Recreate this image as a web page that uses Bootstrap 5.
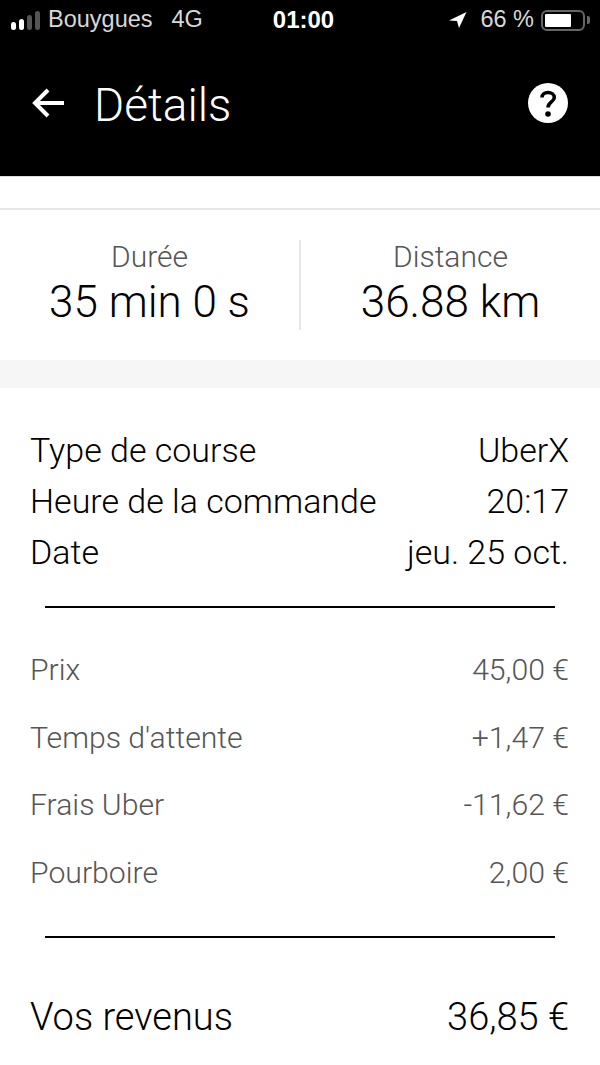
<!DOCTYPE html>
<html lang="fr">
<head>
    <meta charset="UTF-8">
    <meta name="viewport" content="width=device-width, initial-scale=1.0">
    <title>Détails</title>
    <link rel="stylesheet" href="https://cdn.jsdelivr.net/npm/bootstrap@5.3.0/dist/css/bootstrap.min.css">
    <style>
        body {
            background-color: #fff;
            font-family: Roboto, "Noto Sans", sans-serif;
            font-weight: 300;
            color: #000;
        }
        .top-head {
            height: 177px;
            background-color: #000;
            border-bottom: 1px solid #ddd;
        }
        .status-bar {
            height: 38px;
            padding: 2px 10px 0 11px;
            font-family: "Liberation Sans", Arial, sans-serif;
            font-size: 23.5px;
            font-weight: 400;
            color: #d8d8d8;
        }
        .status-left { width: 223px; }
        .status-time { font-size: 24px; font-weight: 700; color: #fff; }
        .status-right { width: 217px; }
        .sig-bars { gap: 3px; margin-right: 8px; }
        .sig-bars span { width: 5px; border-radius: 3px; background: #fff; }
        .sig-bars span.off { background: #555; }
        .bar-a { height: 8px; }
        .bar-b { height: 11px; }
        .bar-c { height: 15px; }
        .bar-d { height: 19px; }
        .net-label { margin-left: 19px; }
        .loc-arrow { margin-right: 13px; }
        .batt-box {
            width: 44px;
            height: 21px;
            margin-left: 7px;
            padding: 2px;
            border: 2px solid #666;
            border-radius: 6px;
        }
        .batt-fill { width: 26px; height: 100%; background: #fff; border-radius: 1px; }
        .batt-tip { width: 3px; height: 8px; margin-left: 2px; background: #666; border-radius: 0 2px 2px 0; }
        .title-bar { height: 130px; padding: 0 32px 0 32px; }
        .title-text { font-size: 46px; font-weight: 300; color: #fff; margin: 4px 0 0 30px; line-height: 1; }
        .stats-wrap { margin-top: 31px; border-top: 2px solid #e6e6e6; height: 152px; padding-top: 30px; }
        .stat-cell { width: 299px; height: 90px; }
        .stat-cell + .stat-cell { width: 301px; border-left: 2px solid #e6e6e6; }
        .stat-label { font-size: 30px; color: #555; line-height: 34px; }
        .stat-value { font-size: 44px; line-height: 52px; padding-top: 2px; }
        .gap-band { height: 28px; background-color: #f6f6f6; }
        .detail-block { padding: 37px 31px 28px 30px; }
        .info-row { font-size: 34px; line-height: 51px; }
        .fare-block { padding: 28px 31px 29.5px 30px; }
        .fare-row { font-size: 30.2px; color: #555; line-height: 67.7px; }
        .rule-line { height: 2px; background: #000; margin: 0 45px; }
        .total-row { font-size: 38px; padding: 0 31px 0 30px; line-height: 48px; margin-top: 55px; }
    </style>
</head>
<body>
    <!-- Header -->
    <div class="top-head">
        <div class="status-bar d-flex align-items-center">
            <div class="status-left d-flex align-items-center">
                <div class="sig-bars d-flex align-items-end">
                    <span class="bar-a"></span><span class="bar-b"></span><span class="bar-c off"></span><span class="bar-d off"></span>
                </div>
                <span>Bouygues</span>
                <span class="net-label">4G</span>
            </div>
            <div class="status-time flex-grow-1 text-center">01:00</div>
            <div class="status-right d-flex align-items-center justify-content-end">
                <svg width="18" height="16" viewBox="0 0 18 16" class="loc-arrow"><path d="M17.500 0 0 8.500l8 .6L10 16z" fill="#fff"/></svg>
                <span>66 %</span>
                <div class="batt-box"><div class="batt-fill"></div></div>
                <div class="batt-tip"></div>
            </div>
        </div>
        <div class="title-bar d-flex align-items-center">
            <svg width="32" height="30" viewBox="0 0 32 30"><path d="M32 15H4M16 2 3 15l13 13" fill="none" stroke="#fff" stroke-width="4"/></svg>
            <h1 class="title-text flex-grow-1">Détails</h1>
            <svg width="40" height="40" viewBox="0 0 40 40"><circle cx="20" cy="20" r="20" fill="#fff"/><path d="M14 14.500c0-3 2.600-5 6-5s6.300 2 6.300 5c0 4.500-6.300 4.500-6.300 10" fill="none" stroke="#000" stroke-width="3.600"/><circle cx="20" cy="31" r="2.800" fill="#000"/></svg>
        </div>
    </div>

    <!-- Duration and distance -->
    <div class="stats-wrap d-flex">
        <div class="stat-cell text-center">
            <div class="stat-label">Durée</div>
            <div class="stat-value">35 min 0 s</div>
        </div>
        <div class="stat-cell text-center">
            <div class="stat-label">Distance</div>
            <div class="stat-value">36.88 km</div>
        </div>
    </div>
    <div class="gap-band"></div>

    <!-- Trip info -->
    <div class="detail-block">
        <div class="info-row d-flex justify-content-between"><span>Type de course</span><span>UberX</span></div>
        <div class="info-row d-flex justify-content-between"><span>Heure de la commande</span><span>20:17</span></div>
        <div class="info-row d-flex justify-content-between"><span>Date</span><span>jeu. 25 oct.</span></div>
    </div>
    <div class="rule-line"></div>

    <!-- Fare breakdown -->
    <div class="fare-block">
        <div class="fare-row d-flex justify-content-between"><span>Prix</span><span>45,00 €</span></div>
        <div class="fare-row d-flex justify-content-between"><span>Temps d'attente</span><span>+1,47 €</span></div>
        <div class="fare-row d-flex justify-content-between"><span>Frais Uber</span><span>-11,62 €</span></div>
        <div class="fare-row d-flex justify-content-between"><span>Pourboire</span><span>2,00 €</span></div>
    </div>
    <div class="rule-line"></div>

    <div class="total-row d-flex justify-content-between"><span>Vos revenus</span><span>36,85 €</span></div>

    <script src="https://cdn.jsdelivr.net/npm/bootstrap@5.3.0/dist/js/bootstrap.bundle.min.js"></script>
</body>
</html>
